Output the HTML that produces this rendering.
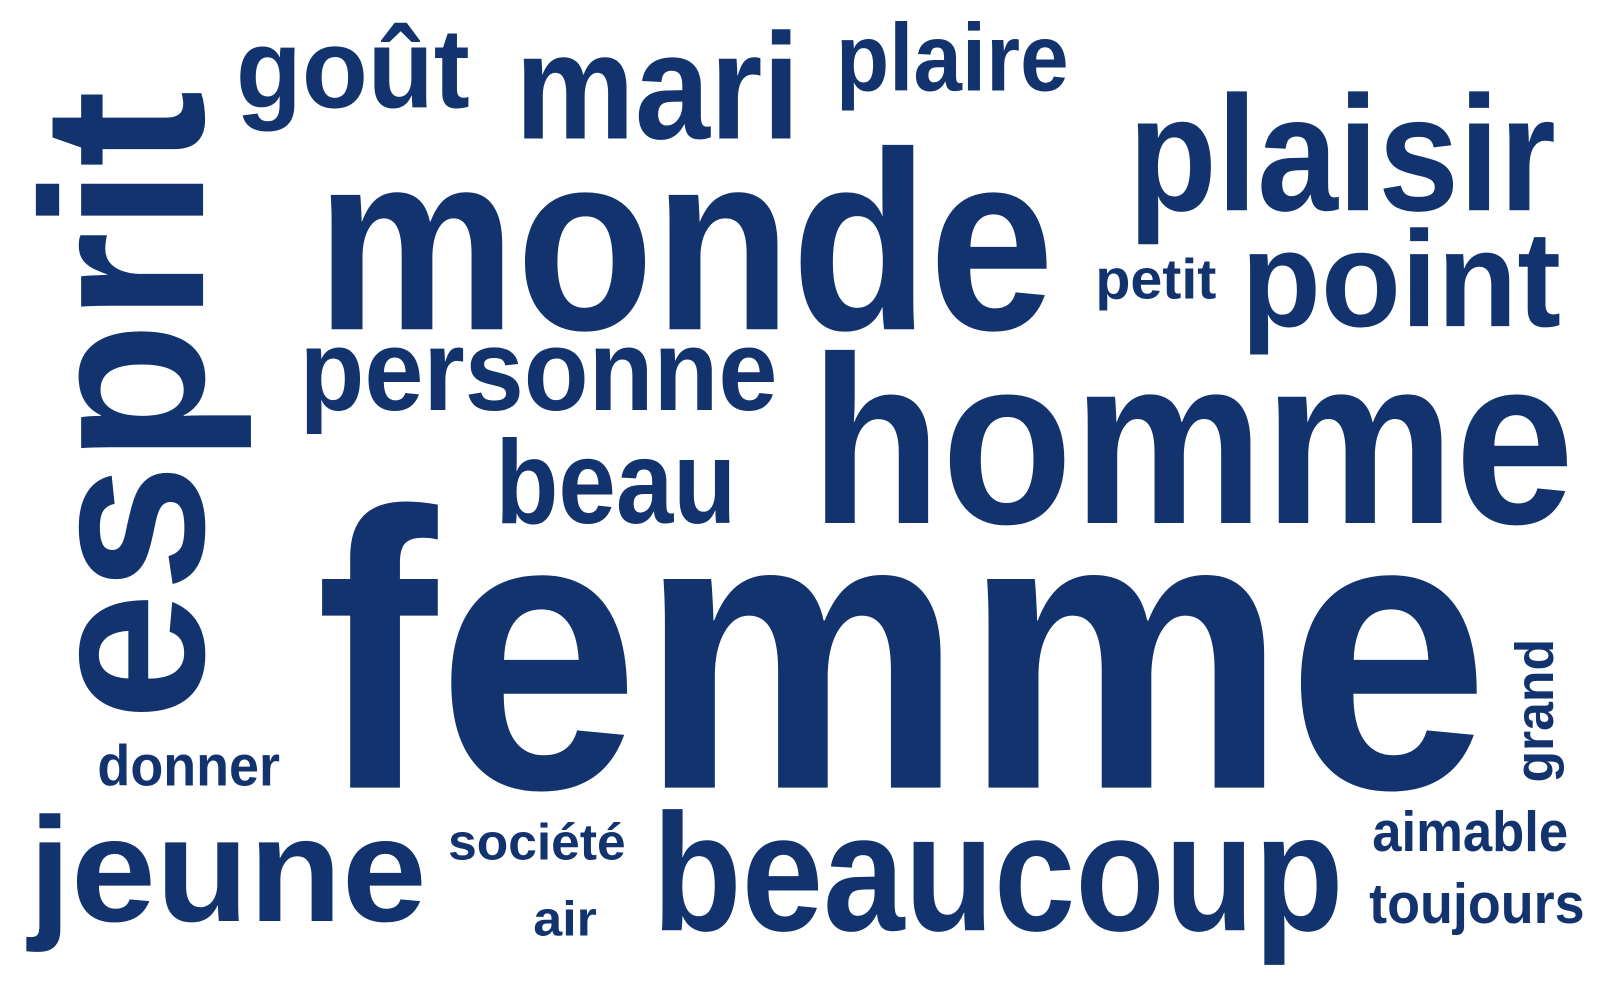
<!DOCTYPE html>
<html><head><meta charset="utf-8"><style>
html,body{margin:0;padding:0;background:#fff;width:1600px;height:1000px;overflow:hidden}
svg{display:block}
text{font-family:"Liberation Sans",sans-serif;font-weight:bold;fill:#13336e}
</style></head><body>
<svg width="1600" height="1000" viewBox="0 0 1600 1000">
<g transform="scale(1.0256)">
<text x="308" y="768" font-size="385" textLength="1144" lengthAdjust="spacingAndGlyphs">femme</text>
<text x="790" y="510" font-size="233" textLength="745" lengthAdjust="spacingAndGlyphs">homme</text>
<text x="308" y="321" font-size="248" textLength="720" lengthAdjust="spacingAndGlyphs">monde</text>
<text transform="translate(198,703) rotate(-90)" font-size="225" textLength="615" lengthAdjust="spacingAndGlyphs">esprit</text>
<text x="636" y="907" font-size="163" textLength="674" lengthAdjust="spacingAndGlyphs">beaucoup</text>
<text x="28" y="898" font-size="145" textLength="388" lengthAdjust="spacingAndGlyphs">jeune</text>
<text x="292" y="400" font-size="113" textLength="466" lengthAdjust="spacingAndGlyphs">personne</text>
<text x="1100" y="205" font-size="160" textLength="417" lengthAdjust="spacingAndGlyphs">plaisir</text>
<text x="1210" y="318" font-size="133" textLength="312" lengthAdjust="spacingAndGlyphs">point</text>
<text x="502" y="135" font-size="147" textLength="278" lengthAdjust="spacingAndGlyphs">mari</text>
<text x="230" y="105" font-size="110" textLength="228" lengthAdjust="spacingAndGlyphs">goût</text>
<text x="815" y="88" font-size="93" textLength="227" lengthAdjust="spacingAndGlyphs">plaire</text>
<text x="483" y="510" font-size="116" textLength="235" lengthAdjust="spacingAndGlyphs">beau</text>
<text x="1068" y="291" font-size="55" textLength="118" lengthAdjust="spacingAndGlyphs">petit</text>
<text x="95" y="766" font-size="56" textLength="178" lengthAdjust="spacingAndGlyphs">donner</text>
<text x="437" y="838" font-size="50" textLength="173" lengthAdjust="spacingAndGlyphs">société</text>
<text x="520" y="912" font-size="48" textLength="62" lengthAdjust="spacingAndGlyphs">air</text>
<text x="1338" y="830" font-size="55" textLength="191" lengthAdjust="spacingAndGlyphs">aimable</text>
<text x="1335" y="900" font-size="55" textLength="210" lengthAdjust="spacingAndGlyphs">toujours</text>
<text transform="translate(1514,763) rotate(-90)" font-size="52" textLength="140" lengthAdjust="spacingAndGlyphs">grand</text>
</g>
</svg>
</body></html>
